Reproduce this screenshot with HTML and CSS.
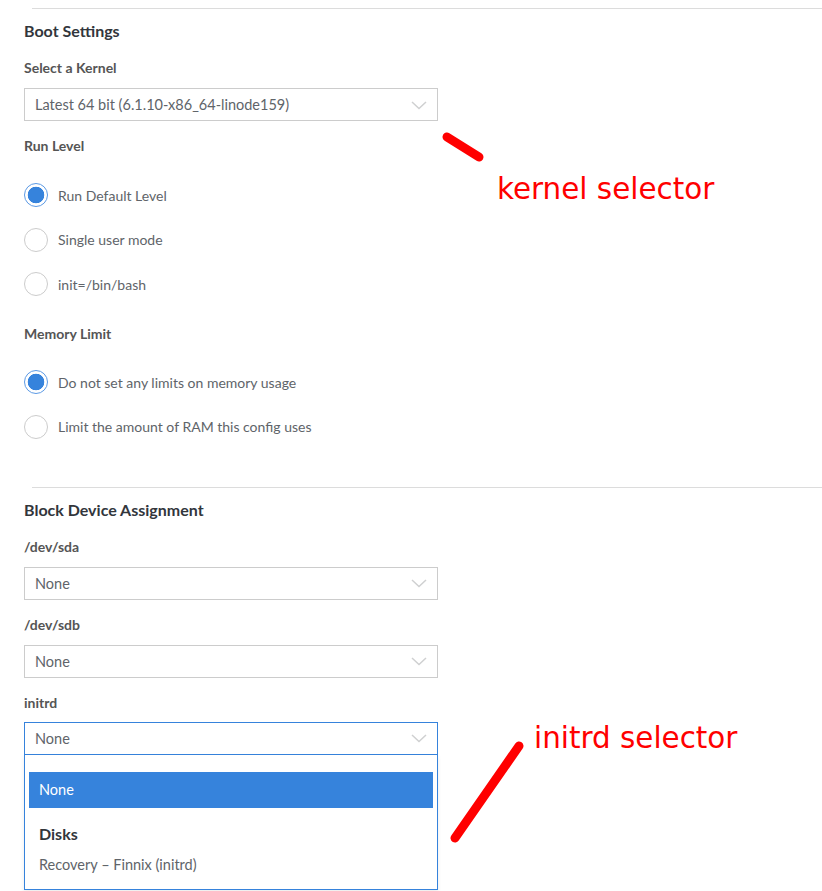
FILE: index.html
```html
<!DOCTYPE html>
<html>
<head>
<meta charset="utf-8">
<link rel="stylesheet" href="styles.css">
</head>
<body>
<div class="page">
  <div class="divider"></div>
  <div class="content">
    <h2 class="section-title t-boot">Boot Settings</h2>
    <div class="label m20">Select a Kernel</div>
    <div class="select m12">
      <span class="select-value">Latest 64 bit (6.1.10-x86_64-linode159)</span>
      <svg class="chev" width="16" height="9" viewBox="0 0 16 9"><polyline points="1,1 8,7.5 15,1" fill="none" stroke="#cfd0d1" stroke-width="1.5"/></svg>
    </div>
    <div class="label m17">Run Level</div>
    <div class="radio-group m29">
      <div class="radio-row"><span class="radio checked"></span><span class="radio-text">Run Default Level</span></div>
      <div class="radio-row"><span class="radio"></span><span class="radio-text">Single user mode</span></div>
      <div class="radio-row"><span class="radio"></span><span class="radio-text">init=/bin/bash</span></div>
    </div>
    <div class="label m30">Memory Limit</div>
    <div class="radio-group m28">
      <div class="radio-row"><span class="radio checked"></span><span class="radio-text">Do not set any limits on memory usage</span></div>
      <div class="radio-row"><span class="radio"></span><span class="radio-text">Limit the amount of RAM this config uses</span></div>
    </div>
  </div>
  <div class="divider m48"></div>
  <div class="content">
    <h2 class="section-title t-block">Block Device Assignment</h2>
    <div class="label m20">/dev/sda</div>
    <div class="select m12">
      <span class="select-value">None</span>
      <svg class="chev" width="16" height="9" viewBox="0 0 16 9"><polyline points="1,1 8,7.5 15,1" fill="none" stroke="#cfd0d1" stroke-width="1.5"/></svg>
    </div>
    <div class="label m17">/dev/sdb</div>
    <div class="select m12">
      <span class="select-value">None</span>
      <svg class="chev" width="16" height="9" viewBox="0 0 16 9"><polyline points="1,1 8,7.5 15,1" fill="none" stroke="#cfd0d1" stroke-width="1.5"/></svg>
    </div>
    <div class="label m17">initrd</div>
    <div class="select-wrap m11">
      <div class="select focused">
        <span class="select-value">None</span>
        <svg class="chev" width="16" height="9" viewBox="0 0 16 9"><polyline points="1,1 8,7.5 15,1" fill="none" stroke="#cfd0d1" stroke-width="1.5"/></svg>
      </div>
      <div class="menu">
        <div class="option selected">None</div>
        <div class="group-title">Disks</div>
        <div class="option">Recovery – Finnix (initrd)</div>
      </div>
    </div>
    <div class="label hidden-label">Root Device</div>
  </div>
</div>
<svg class="annotations" width="822" height="891" viewBox="0 0 822 891">
  <line x1="447" y1="137" x2="479" y2="157" stroke="#ff0000" stroke-width="9" stroke-linecap="round"/>
  <text x="497" y="199" class="note">kernel selector</text>
  <line x1="519" y1="746" x2="455" y2="838" stroke="#ff0000" stroke-width="9" stroke-linecap="round"/>
  <text x="534" y="748" class="note">initrd selector</text>
</svg>
</body>
</html>
```
FILE: styles.css
```css
html, body {
  margin: 0;
  padding: 0;
  background: #ffffff;
}
body {
  font-family: Lato, "Liberation Sans", sans-serif;
  width: 822px;
  height: 891px;
  overflow: hidden;
  position: relative;
}
.page {
  display: flex;
  flex-direction: column;
}
.divider {
  margin-top: 8px;
  margin-left: 32px;
  height: 1px;
  background: #dcdcdc;
}
.divider.m48 { margin-top: 48px; }
.content {
  display: flex;
  flex-direction: column;
  padding-left: 24px;
  width: 414px;
}
.section-title {
  margin: 0;
  font-size: 16px;
  line-height: 18px;
  font-weight: 700;
  color: #32363c;
}
.t-boot { margin-top: 13px; }
.t-block { margin-top: 13px; }
.label {
  font-size: 14px;
  line-height: 16px;
  font-weight: 700;
  color: #555555;
}
.m11 { margin-top: 11px; }
.m12 { margin-top: 12px; }
.m17 { margin-top: 17px; }
.m20 { margin-top: 20px; }
.m28 { margin-top: 28px; }
.m29 { margin-top: 29px; }
.m30 { margin-top: 30px; }
.select {
  box-sizing: border-box;
  height: 33px;
  border: 1px solid #cccccc;
  display: flex;
  align-items: center;
  justify-content: space-between;
  padding: 0 10px 0 10px;
  background: #fff;
}
.select.focused { border-color: #3683dc; }
.select-value {
  font-size: 14.5px;
  color: #606469;
}
.chev { display: block; margin-top: 1px; }
.radio-group {
  display: flex;
  flex-direction: column;
  gap: 20.5px;
}
.radio-row {
  display: flex;
  align-items: center;
  height: 24px;
}
.radio {
  box-sizing: border-box;
  width: 24px;
  height: 24px;
  border-radius: 50%;
  border: 1px solid #cccccc;
  background: #fff;
  flex: none;
}
.radio.checked {
  border-color: #5c9ae5;
  background: radial-gradient(circle, #3683dc 0, #3683dc 8px, #ffffff 8.6px);
}
.radio-text {
  margin-left: 10px;
  font-size: 14px;
  color: #606469;
}
.select-wrap { position: relative; }
.menu {
  position: absolute;
  top: 33px;
  left: 0;
  right: 0;
  box-sizing: border-box;
  height: 135px;
  border: 1px solid #3683dc;
  border-top: none;
  background: #fff;
  padding: 17px 4px 0 4px;
  z-index: 2;
  box-shadow: 0 2px 4px rgba(0,0,0,0.08);
}
.option {
  height: 36px;
  line-height: 36px;
  padding-left: 10px;
  font-size: 14.5px;
  color: #606469;
}
.option.selected {
  background: #3683dc;
  color: #ffffff;
}
.group-title {
  margin-top: 12px;
  padding-left: 10px;
  font-size: 16px;
  line-height: 28px;
  font-weight: 700;
  color: #32363c;
}
.menu .option:last-child {
  height: 34px;
  line-height: 34px;
}
.hidden-label {
  margin-top: 133px;
  color: #32363c;
}
.annotations {
  position: absolute;
  left: 0;
  top: 0;
  pointer-events: none;
  z-index: 5;
}
.note {
  font-family: "DejaVu Sans", sans-serif;
  font-size: 29.4px;
  fill: #ff0000;
}
```
